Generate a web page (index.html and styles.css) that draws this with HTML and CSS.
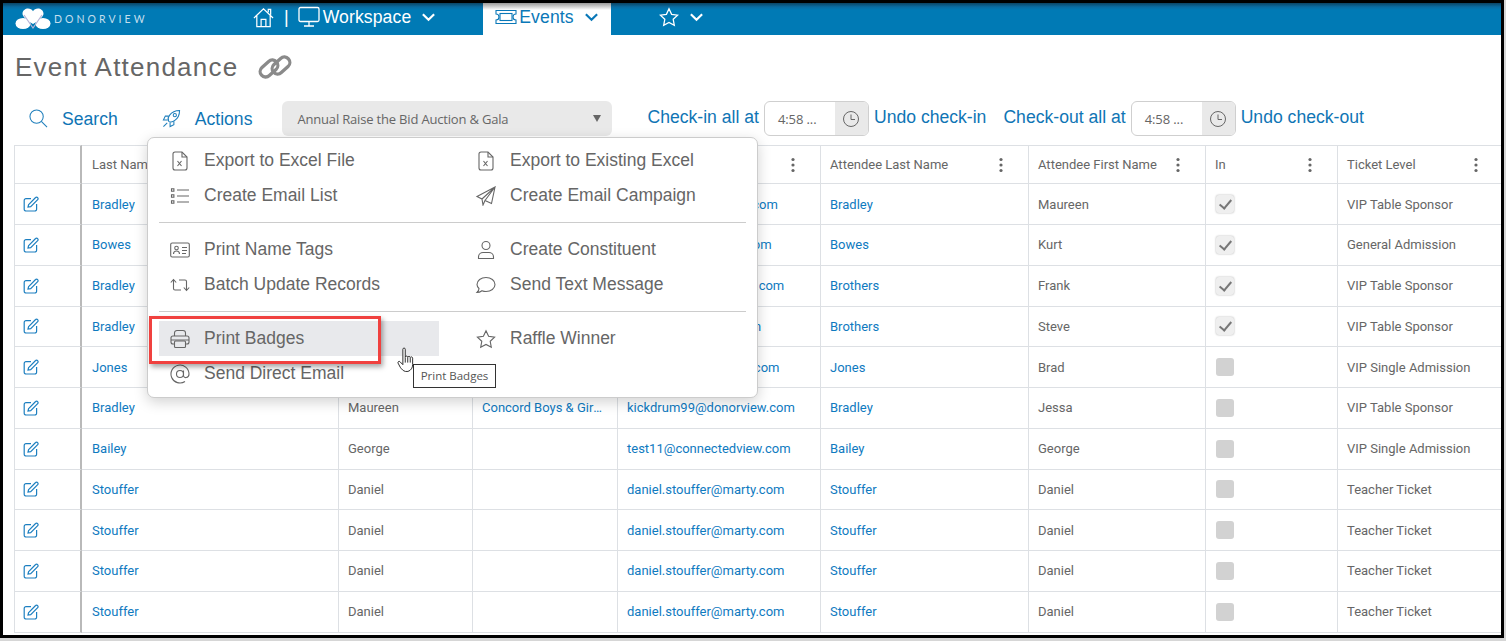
FILE: index.html
```html
<!DOCTYPE html>
<html lang="en">
<head>
<meta charset="utf-8">
<title>Event Attendance</title>
<link rel="stylesheet" href="styles.css">
</head>
<body>
<svg class="defs" width="0" height="0" aria-hidden="true">
  <symbol id="i-edit" viewBox="0 0 16 16"><path d="M8 2.600H3a1.800 1.800 0 0 0-1.800 1.800v8.800A1.800 1.800 0 0 0 3 15h8.800a1.800 1.800 0 0 0 1.800-1.800V8"/><path d="M5.600 8.600 12.600 1.500a1.300 1.300 0 0 1 1.900 0l.2 .2a1.300 1.300 0 0 1 0 1.900L7.700 10.600l-2.700 .5z"/></symbol>
  <symbol id="i-kebab" viewBox="0 0 4 16"><circle cx="2" cy="2.500" r="1.600"/><circle cx="2" cy="8" r="1.600"/><circle cx="2" cy="13.500" r="1.600"/></symbol>
  <symbol id="i-chev" viewBox="0 0 16 10"><path d="M2 2l6 6 6-6"/></symbol>
  <symbol id="i-star" viewBox="0 0 20 20"><path d="M10 1.800l2.600 5.500 6 .8-4.400 4.200 1.100 6L10 15.400l-5.300 2.900 1.100-6L1.400 8.100l6-.8z"/></symbol>
  <symbol id="i-clock" viewBox="0 0 18 18"><circle cx="9" cy="9" r="7.500"/><path d="M9 4.500V9.500h4"/></symbol>
  <symbol id="i-xls" viewBox="0 0 16 20"><path d="M10 1H3a2 2 0 0 0-2 2v14a2 2 0 0 0 2 2h10a2 2 0 0 0 2-2V6z"/><path d="M10 1v5h5M5.500 10l4 5M9.500 10l-4 5"/></symbol>
</svg>
<div class="frame">
  <header class="nav">
    <svg class="logo" viewBox="0 0 36 22" aria-hidden="true">
      <ellipse cx="8" cy="15.500" rx="7.500" ry="5.500"/><ellipse cx="28" cy="15.500" rx="7.500" ry="5.500"/>
      <path d="M18 16C11 11.500 7.500 8.500 7.500 5.500 7.500 2.500 10.500 .5 13 .5c2.200 0 4 1 5 2.800C19 1.500 20.800 .5 23 .5c2.500 0 5.500 2 5.500 5 0 3-3.500 6-10.500 10.500z"/>
      <path class="logo-v" d="M9 7l9 13 9-13"/>
    </svg>
    <span class="brand">DONORVIEW</span>
    <svg class="ic ic-home" viewBox="0 0 22 22" aria-hidden="true"><path d="M1 11.500 11 2l10 9.500M4 9v11.500h14V9M8.500 20.500V13h5v7.500M16 5.500V2.500h2.500V8"/></svg>
    <span class="sep">|</span>
    <svg class="ic ic-mon" viewBox="0 0 22 22" aria-hidden="true"><rect x="1" y="1.500" width="20" height="14" rx="1.500"/><path d="M11 15.500v4M6 20h10"/></svg>
    <span class="nav-t nav-ws">Workspace</span>
    <svg class="chev chev-ws" aria-hidden="true"><use href="#i-chev"/></svg>
    <div class="tab">
      <svg class="ic ic-tick" viewBox="0 0 22 16" aria-hidden="true"><path d="M1 1.500h20v3.500a3 3 0 0 0 0 6v3.500H1V11a3 3 0 0 0 0-6z"/><rect x="5" y="4.500" width="12" height="7"/></svg>
      <span class="nav-t">Events</span>
      <svg class="chev chev-tab" aria-hidden="true"><use href="#i-chev"/></svg>
    </div>
    <svg class="ic ic-star" aria-hidden="true"><use href="#i-star"/></svg>
    <svg class="chev chev-star" aria-hidden="true"><use href="#i-chev"/></svg>
  </header>

  <div class="title-row">
    <h1 class="title">Event Attendance</h1>
    <svg class="link-ic" viewBox="0 0 34 28" aria-hidden="true">
      <rect x="1" y="10" width="20" height="11" rx="5.500" transform="rotate(-42 11 15.500)"/>
      <rect x="13" y="7" width="20" height="11" rx="5.500" transform="rotate(-42 23 12.500)"/>
    </svg>
  </div>

  <div class="toolbar">
    <svg class="ic-tool ic-search" viewBox="0 0 20 20" aria-hidden="true"><circle cx="8" cy="8" r="7"/><path d="M13 13l6 6"/></svg>
    <a class="tool-link tl-search">Search</a>
    <svg class="ic-tool ic-rocket" viewBox="0 0 20 20" aria-hidden="true"><path d="M7 13C6 11 6 9 8 6.500 10.500 3 14.500 1.500 18.500 1.500 18.500 5.500 17 9.500 13.500 12 11 14 9 14 7 13z"/><circle cx="13.500" cy="6.500" r="1.700"/><path d="M7 7.500H3.500L1.500 11.500H6M12.500 13v3.500L8.500 18.500V14M5.500 14.500 2 18l-.5 .5"/></svg>
    <a class="tool-link tl-actions">Actions</a>
    <div class="select"><span>Annual Raise the Bid Auction &amp; Gala</span><i class="caret"></i></div>
    <a class="tool-link tl-in">Check-in all at</a>
    <div class="time"><span class="time-v">4:58 ...</span><span class="time-b"><svg class="ic-clock" aria-hidden="true"><use href="#i-clock"/></svg></span></div>
    <a class="tool-link tl-undo">Undo check-in</a>
    <a class="tool-link tl-out">Check-out all at</a>
    <div class="time"><span class="time-v">4:58 ...</span><span class="time-b"><svg class="ic-clock" aria-hidden="true"><use href="#i-clock"/></svg></span></div>
    <a class="tool-link tl-undo">Undo check-out</a>
  </div>

  <table class="grid">
    <colgroup><col class="c1"><col class="c2"><col class="c3"><col class="c4"><col class="c5"><col class="c6"><col class="c7"><col class="c8"><col class="c9"></colgroup>
    <thead>
      <tr>
        <th class="edit"></th>
        <th class="name"><div class="th">Last Name</div></th>
        <th><div class="th">First Name</div></th>
        <th><div class="th">Organization</div></th>
        <th><div class="th">Email<svg class="kebab"><use href="#i-kebab"/></svg></div></th>
        <th><div class="th">Attendee Last Name<svg class="kebab"><use href="#i-kebab"/></svg></div></th>
        <th><div class="th">Attendee First Name<svg class="kebab"><use href="#i-kebab"/></svg></div></th>
        <th><div class="th">In<svg class="kebab"><use href="#i-kebab"/></svg></div></th>
        <th><div class="th">Ticket Level<svg class="kebab"><use href="#i-kebab"/></svg></div></th>
      </tr>
    </thead>
    <tbody>
      <tr><td class="edit"><svg class="ic-edit"><use href="#i-edit"/></svg></td><td class="lnk name">Bradley</td><td>Maureen</td><td></td><td class="lnk">maureen@donorview.com</td><td class="lnk">Bradley</td><td>Maureen</td><td><span class="cb on"></span></td><td>VIP Table Sponsor</td></tr>
      <tr><td class="edit"><svg class="ic-edit"><use href="#i-edit"/></svg></td><td class="lnk name">Bowes</td><td>Kurt</td><td></td><td class="lnk">kbowes@donorview.com</td><td class="lnk">Bowes</td><td>Kurt</td><td><span class="cb on"></span></td><td>General Admission</td></tr>
      <tr><td class="edit"><svg class="ic-edit"><use href="#i-edit"/></svg></td><td class="lnk name">Bradley</td><td>Frank</td><td></td><td class="lnk">frbrothers@donorview.com</td><td class="lnk">Brothers</td><td>Frank</td><td><span class="cb on"></span></td><td>VIP Table Sponsor</td></tr>
      <tr><td class="edit"><svg class="ic-edit"><use href="#i-edit"/></svg></td><td class="lnk name">Bradley</td><td>Steve</td><td></td><td class="lnk">stevie@donorview.com</td><td class="lnk">Brothers</td><td>Steve</td><td><span class="cb on"></span></td><td>VIP Table Sponsor</td></tr>
      <tr><td class="edit"><svg class="ic-edit"><use href="#i-edit"/></svg></td><td class="lnk name">Jones</td><td>Brad</td><td></td><td class="lnk">b.a.jones@donorview.com</td><td class="lnk">Jones</td><td>Brad</td><td><span class="cb"></span></td><td>VIP Single Admission</td></tr>
      <tr><td class="edit"><svg class="ic-edit"><use href="#i-edit"/></svg></td><td class="lnk name">Bradley</td><td>Maureen</td><td class="lnk"><div class="clip">Concord Boys &amp; Girls Club</div></td><td class="lnk">kickdrum99@donorview.com</td><td class="lnk">Bradley</td><td>Jessa</td><td><span class="cb"></span></td><td>VIP Table Sponsor</td></tr>
      <tr><td class="edit"><svg class="ic-edit"><use href="#i-edit"/></svg></td><td class="lnk name">Bailey</td><td>George</td><td></td><td class="lnk">test11@connectedview.com</td><td class="lnk">Bailey</td><td>George</td><td><span class="cb"></span></td><td>VIP Single Admission</td></tr>
      <tr><td class="edit"><svg class="ic-edit"><use href="#i-edit"/></svg></td><td class="lnk name">Stouffer</td><td>Daniel</td><td></td><td class="lnk">daniel.stouffer@marty.com</td><td class="lnk">Stouffer</td><td>Daniel</td><td><span class="cb"></span></td><td>Teacher Ticket</td></tr>
      <tr><td class="edit"><svg class="ic-edit"><use href="#i-edit"/></svg></td><td class="lnk name">Stouffer</td><td>Daniel</td><td></td><td class="lnk">daniel.stouffer@marty.com</td><td class="lnk">Stouffer</td><td>Daniel</td><td><span class="cb"></span></td><td>Teacher Ticket</td></tr>
      <tr><td class="edit"><svg class="ic-edit"><use href="#i-edit"/></svg></td><td class="lnk name">Stouffer</td><td>Daniel</td><td></td><td class="lnk">daniel.stouffer@marty.com</td><td class="lnk">Stouffer</td><td>Daniel</td><td><span class="cb"></span></td><td>Teacher Ticket</td></tr>
      <tr><td class="edit"><svg class="ic-edit"><use href="#i-edit"/></svg></td><td class="lnk name">Stouffer</td><td>Daniel</td><td></td><td class="lnk">daniel.stouffer@marty.com</td><td class="lnk">Stouffer</td><td>Daniel</td><td><span class="cb"></span></td><td>Teacher Ticket</td></tr>
    </tbody>
  </table>

  <div class="menu">
    <div class="menu-sec">
      <div class="item"><svg class="mi"><use href="#i-xls"/></svg>Export to Excel File</div>
      <div class="item"><svg class="mi"><use href="#i-xls"/></svg>Export to Existing Excel</div>
      <div class="item"><svg class="mi" viewBox="0 0 20 20"><path d="M7 4h12M7 10h12M7 16h12"/><rect x="1.500" y="2.800" width="2.400" height="2.400"/><rect x="1.500" y="8.800" width="2.400" height="2.400"/><rect x="1.500" y="14.800" width="2.400" height="2.400"/></svg>Create Email List</div>
      <div class="item"><svg class="mi" viewBox="0 0 20 20"><path d="M19 1 1 10.500l5 2.500L19 1 15.500 17.500 9 14.500 7 19l-1-6M9 14.500 19 1"/></svg>Create Email Campaign</div>
    </div>
    <hr class="rule">
    <div class="menu-sec">
      <div class="item"><svg class="mi" viewBox="0 0 20 20"><rect x=".7" y="3" width="18.600" height="14" rx="1.500"/><circle cx="6.500" cy="8" r="1.800"/><path d="M3.500 14c0-2 1.500-3 3-3s3 1 3 3M12 7.500h5M12 10.500h5M12 13.500h4"/></svg>Print Name Tags</div>
      <div class="item"><svg class="mi" viewBox="0 0 20 20"><circle cx="10" cy="5.500" r="4"/><path d="M2.500 18.500v-1.500c0-3 2.500-4.500 4.500-4.500h6c2 0 4.500 1.500 4.500 4.500v1.500z"/></svg>Create Constituent</div>
      <div class="item"><svg class="mi" viewBox="0 0 20 20"><path d="M.8 7.500 3.500 4.500 6.200 7.500M3.500 5v8.500a1.500 1.500 0 0 0 1.500 1.500h6M19.200 12.500 16.500 15.500 13.800 12.500M16.500 15V6.500A1.500 1.500 0 0 0 15 5H9"/></svg>Batch Update Records</div>
      <div class="item"><svg class="mi" viewBox="0 0 20 20"><path d="M10 2.500c5 0 9 3 9 7s-4 7-9 7c-1.500 0-2.800-.3-4-.8C4.500 16.800 3 17.500 1 17.500c1-1 2-2.500 2-4C1.800 12.300 1 11 1 9.500c0-4 4-7 9-7z"/></svg>Send Text Message</div>
    </div>
    <hr class="rule">
    <div class="menu-sec">
      <div class="item hover"><svg class="mi" viewBox="0 0 20 20"><path d="M4.500 7V4a2.500 2.500 0 0 1 2.500-2.500h6A2.500 2.500 0 0 1 15.500 4v3M4.500 15H3a2 2 0 0 1-2-2V9a2 2 0 0 1 2-2h14a2 2 0 0 1 2 2v4a2 2 0 0 1-2 2h-1.500M1 11h18"/><rect x="4.500" y="12" width="11" height="6.500" rx="1"/></svg>Print Badges</div>
      <div class="item"><svg class="mi"><use href="#i-star"/></svg>Raffle Winner</div>
      <div class="item"><svg class="mi" viewBox="0 0 20 20"><circle cx="10" cy="10" r="3.500"/><path d="M13.500 6.500v5c0 3 5.500 3 5.500-1.500a9 9 0 1 0-4 7.500"/></svg>Send Direct Email</div>
    </div>
  </div>
  <div class="redbox"></div>
  <div class="tip">Print Badges</div>
  <svg class="hand" viewBox="0 0 18 25" aria-hidden="true"><path d="M5.500 2.200c0-1.600 2.300-1.600 2.300 0v7.600c.2-1.500 2.300-1.400 2.400 .1 .3-1.300 2.300-1.200 2.400 .2 .4-1 2.200-.8 2.300 .6v6.300c0 3-1.500 5.500-4.500 6.500H8C5.800 23 4.500 21.500 3 19.500L.9 15.500c-.6-1.300 1-2.400 2-1.200l2.600 2.700z"/><path d="M7.800 10v5M10.200 10v5M12.600 10.500V15"/></svg>
</div>
</body>
</html>
```
FILE: styles.css
```css
* { box-sizing: border-box; }
html, body { margin: 0; height: 100%; overflow: hidden; }
body { background: #d6d6d6; font-family: "Liberation Sans", Arial, sans-serif; color: #666; }
.defs { position: absolute; }

.frame { position: relative; width: 1504px; height: 638px; border: 3px solid #000; background: #fff; overflow: hidden; }

/* top bar */
.nav { display: flex; align-items: center; height: 32px; padding: 0 0 4px 12px; background: linear-gradient(#0b4464 0, #0a6da3 4px, #007ab5 7px); color: #fff; }
.logo { width: 36px; height: 22px; margin-top: 4px; fill: #fff; flex: none; }
.logo-v { fill: none; stroke: #b7b3d6; stroke-width: 1.200; }
.brand { font: 10.500px "Lato", sans-serif; letter-spacing: 3.050px; color: #c4dfee; margin: 4px 0 0 3px; width: 199px; flex: none; }
.ic { fill: none; stroke: currentColor; stroke-width: 1.300; flex: none; }
.ic-home { width: 21px; height: 21px; }
.sep { margin-left: 10px; font-size: 18px; }
.ic-mon { width: 22px; height: 22px; margin-left: 9px; }
.nav-t { font-size: 17.600px; letter-spacing: .1px; }
.nav-ws { margin-left: 3px; }
.chev { width: 15px; height: 10px; fill: none; stroke: currentColor; stroke-width: 2.300; flex: none; }
.chev-ws { margin-left: 10px; }
.tab { display: flex; align-items: center; align-self: stretch; width: 128px; margin: 0 0 -4px 47px; padding: 0 0 4px 12px; background: linear-gradient(#9a9a9a 0, #fff 7px); color: #0a78b8; }
.ic-tick { width: 22px; height: 16px; margin-right: 2px; stroke-width: 1.100; }
.chev-tab { margin-left: 10px; }
.ic-star { width: 20px; height: 20px; margin-left: 48px; }
.chev-star { margin-left: 10px; }

/* title */
.title-row { display: flex; align-items: center; height: 64px; padding-left: 12px; }
.title { margin: 0; font-size: 26px; font-weight: 400; letter-spacing: 1.220px; color: #666; }
.link-ic { width: 34px; height: 28px; margin-left: 20px; fill: none; stroke: #8a8a8a; stroke-width: 3.300; }

/* toolbar */
.toolbar { display: flex; align-items: center; height: 35px; margin-top: 2px; }
.ic-tool { width: 19px; height: 19px; fill: none; stroke: #1f7fbc; stroke-width: 1.100; flex: none; }
.ic-search { margin-left: 26px; }
.ic-rocket { margin-left: 44px; }
.tool-link { font-size: 17.600px; color: #0f75b5; position: relative; top: -1px; }
.tl-search { margin-left: 14px; top: 1px; }
.tl-actions { margin-left: 14px; top: 1px; }
.tl-in { margin-left: 35px; }
.tl-undo { margin-left: 5px; }
.tl-out { margin-left: 17px; }
.select { width: 330px; height: 35px; margin-left: 30px; display: flex; align-items: center; justify-content: space-between; padding: 0 11px 0 15px; background: #e9e9e9; border-radius: 6px; font: 13px "Open Sans", sans-serif; letter-spacing: -.18px; color: #666; }
.caret { width: 0; height: 0; border: 4.500px solid transparent; border-top: 7px solid #666; border-bottom: 0; }
.time { display: flex; width: 105px; height: 35px; margin-left: 5px; border: 1px solid #cfcfcf; border-radius: 6px; overflow: hidden; background: #fff; }
.time-v { flex: 1; padding-left: 13px; font: 13px/35px "Open Sans", sans-serif; letter-spacing: -.1px; color: #666; }
.time-b { display: flex; align-items: center; justify-content: center; width: 33px; background: #e9e9e9; }
.ic-clock { width: 18px; height: 18px; fill: none; stroke: #666; stroke-width: 1; }

/* table */
.grid { table-layout: fixed; border-collapse: separate; border-spacing: 0; width: 1489px; margin: 9px 0 0 11px; border-left: 1px solid #dde0e4; font: 13px "Roboto", sans-serif; color: #666; }
.c1 { width: 67px; } .c2 { width: 257px; } .c3 { width: 134px; } .c4 { width: 145px; } .c5 { width: 203px; }
.c6 { width: 208px; } .c7 { width: 177px; } .c8 { width: 132px; } .c9 { width: 166px; }
.grid th, .grid td { padding: 0 10px 0 9px; border-right: 1px solid #dde0e4; border-bottom: 1px solid #dde0e4; text-align: left; font-weight: 400; white-space: nowrap; overflow: hidden; }
.grid th { height: 39.300px; border-top: 1px solid #dde0e4; }
.grid td { height: 40.750px; }
.grid .name { padding-left: 10px; }
.grid .edit { border-right: 2px solid #b9b9b9; padding-left: 8px; }
.th { display: flex; align-items: center; justify-content: space-between; padding-right: 15px; }
.kebab { width: 4px; height: 16px; fill: #666; flex: none; }
.ic-edit { display: block; width: 16px; height: 16px; fill: none; stroke: #1d7fc0; stroke-width: 1.200; }
.lnk { color: #0f7abf; }
.clip { overflow: hidden; text-overflow: ellipsis; padding-right: 3px; }
.cb { display: block; width: 18px; height: 18px; margin-left: 1px; border-radius: 3px; background: #d2d2d2; }
.cb.on { background: #efefef; box-shadow: 0 0 2px #aaa; position: relative; }
.cb.on::after { content: ""; position: absolute; left: 6px; top: 2px; width: 5px; height: 10px; border: solid #777; border-width: 0 2px 2px 0; transform: rotate(40deg); }

/* menu */
.menu { position: absolute; left: 144px; top: 134px; width: 611px; height: 261px; padding: 5px 11px 0; background: #fff; border: 1px solid #ccc; border-radius: 7px; box-shadow: 0 4px 14px rgba(0,0,0,.18); font-size: 17.500px; color: #666; }
.menu-sec { display: grid; grid-template-columns: 306px 280px; }
.item { display: flex; align-items: center; height: 35px; width: 280px; padding-left: 10px; white-space: nowrap; }
.item.hover { background: #e8e9ec; }
.mi { width: 22px; height: 20px; margin-right: 13px; fill: none; stroke: #666; stroke-width: 1.100; flex: none; }
.rule { margin: 9px 0; border: 0; border-top: 1px solid #ccc; height: 0; }
.redbox { position: absolute; left: 146px; top: 313px; width: 232px; height: 48px; border: 3px solid #f0413f; box-shadow: 2px 3px 5px rgba(0,0,0,.35); }
.tip { position: absolute; left: 410px; top: 361px; width: 83px; height: 24px; border: 1px solid #333; background: #fff; font: 11.500px/22px "Open Sans", sans-serif; text-align: center; color: #555; }
.hand { position: absolute; left: 394px; top: 344px; width: 19px; height: 26px; fill: #fff; stroke: #222; stroke-width: .900; }
```
